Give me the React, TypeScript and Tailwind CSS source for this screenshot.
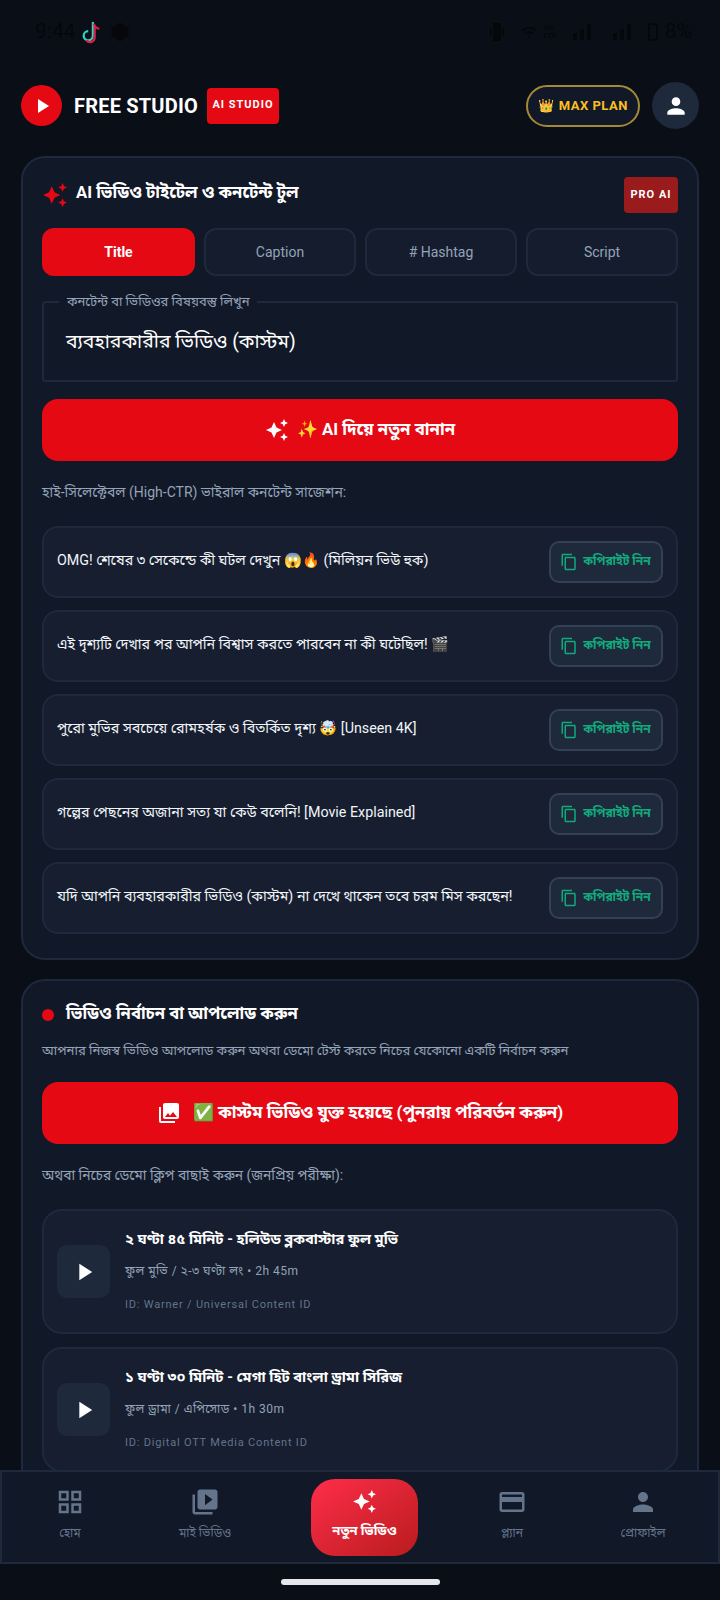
import type { ReactNode } from 'react';

const font = { fontFamily: 'Roboto, "Noto Sans Bengali", "Noto Sans", "Noto Sans CJK SC", sans-serif' };

const SPARKLE =
  'M19 9l1.25-2.75L23 5l-2.75-1.25L19 1l-1.25 2.75L15 5l2.75 1.25L19 9zm-7.5.5L9 4 6.5 9.5 1 12l5.5 2.5L9 20l2.5-5.5L17 12l-5.5-2.5zM19 15l-1.25 2.75L15 19l2.75 1.25L19 23l1.25-2.75L23 19l-2.75-1.25L19 15z';
const COPY =
  'M16 1H4c-1.1 0-2 .9-2 2v14h2V3h12V1zm3 4H8c-1.1 0-2 .9-2 2v14c0 1.1.9 2 2 2h11c1.1 0 2-.9 2-2V7c0-1.1-.9-2-2-2zm0 16H8V7h11v14z';
const PERSON =
  'M12 12c2.21 0 4-1.79 4-4s-1.79-4-4-4-4 1.79-4 4 1.79 4 4 4zm0 2c-2.67 0-8 1.34-8 4v2h16v-2c0-2.66-5.33-4-8-4z';
const PLAY = 'M8 5v14l11-7z';
const GRID =
  'M3 3v8h8V3H3zm6 6H5V5h4v4zm-6 4v8h8v-8H3zm6 6H5v-4h4v4zm4-16v8h8V3h-8zm6 6h-4V5h4v4zm-6 4v8h8v-8h-8zm6 6h-4v-4h4v4z';
const VIDEOS =
  'M4 6H2v14c0 1.1.9 2 2 2h14v-2H4V6zm16-4H8c-1.1 0-2 .9-2 2v12c0 1.1.9 2 2 2h12c1.1 0 2-.9 2-2V4c0-1.1-.9-2-2-2zm-8 12.5v-9l6 4.5-6 4.5z';
const CARD =
  'M20 4H4c-1.11 0-1.99.89-1.99 2L2 18c0 1.11.89 2 2 2h16c1.11 0 2-.89 2-2V6c0-1.11-.89-2-2-2zm0 14H4v-6h16v6zm0-10H4V6h16v2z';
const PHOTOS =
  'M22 16V4c0-1.1-.9-2-2-2H8c-1.1 0-2 .9-2 2v12c0 1.1.9 2 2 2h12c1.1 0 2-.9 2-2zm-11-4l2.03 2.71L16 11l4 5H8l3-4zM2 6v14c0 1.1.9 2 2 2h14v-2H4V6H2z';

function Icon({ d, className }: { d: string; className: string }) {
  return (
    <svg viewBox="0 0 24 24" fill="currentColor" className={className}>
      <path d={d} />
    </svg>
  );
}

function Signal({ className }: { className: string }) {
  return (
    <div className={`flex items-end gap-[3px] ${className}`}>
      <span className="h-[7px] w-[4px] bg-current" />
      <span className="h-[11px] w-[4px] bg-current" />
      <span className="h-[16px] w-[4px] bg-current" />
    </div>
  );
}

const tabs = ['Caption', '# Hashtag', 'Script'];

const suggestions: ReactNode[] = [
  'OMG! শেষের ৩ সেকেন্ডে কী ঘটল দেখুন 😱🔥 (মিলিয়ন ভিউ হুক)',
  'এই দৃশ্যটি দেখার পর আপনি বিশ্বাস করতে পারবেন না কী ঘটেছিল! 🎬',
  'পুরো মুভির সবচেয়ে রোমহর্ষক ও বিতর্কিত দৃশ্য 🤯 [Unseen 4K]',
  'গল্পের পেছনের অজানা সত্য যা কেউ বলেনি! [Movie Explained]',
  'যদি আপনি ব্যবহারকারীর ভিডিও (কাস্টম) না দেখে থাকেন তবে চরম মিস করছেন!',
];

const clips = [
  {
    title: '২ ঘণ্টা ৪৫ মিনিট - হলিউড ব্লকবাস্টার ফুল মুভি',
    meta: 'ফুল মুভি / ২-৩ ঘণ্টা লং • 2h 45m',
    id: 'ID: Warner / Universal Content ID',
  },
  {
    title: '১ ঘণ্টা ৩০ মিনিট - মেগা হিট বাংলা ড্রামা সিরিজ',
    meta: 'ফুল ড্রামা / এপিসোড • 1h 30m',
    id: 'ID: Digital OTT Media Content ID',
  },
];

const navLeft = [
  { label: 'হোম', icon: GRID, box: 'w-[136px]' },
  { label: 'মাই ভিডিও', icon: VIDEOS, box: 'w-[134px]' },
];
const navRight = [
  { label: 'প্ল্যান', icon: CARD, box: 'w-[130px]' },
  { label: 'প্রোফাইল', icon: PERSON, box: 'w-[132px]' },
];

export default function App() {
  return (
    <div style={font} className="relative h-[1600px] w-[720px] overflow-hidden bg-[#0a0e17] text-white">
      {/* Status bar */}
      <div className="flex h-[64px] items-center justify-between pl-[35px] pr-[28px] text-[#05070b]">
        <div className="flex items-center gap-[4px]">
          <span className="text-[21px]">9:44</span>
          <svg viewBox="0 0 24 28" className="h-[26px] w-[22px]" fill="none" strokeWidth="2.4">
            <path d="M14 3v15a5 5 0 1 1-5-5" stroke="#2dd4bf" />
            <path d="M15 5c1 3 3 5 6 5.500M16 6v14a5 5 0 0 1-9 3" stroke="#e11d48" />
          </svg>
          <svg viewBox="0 0 24 24" className="ml-[4px] h-[20px] w-[20px]" fill="currentColor">
            <path d="M12 1l10 6v10l-10 6-10-6V7z" />
          </svg>
        </div>
        <div className="flex items-center">
          <svg viewBox="0 0 16 18" className="h-[18px] w-[16px]" fill="currentColor">
            <path d="M4 0h8v18H4zM1 5h2v8H1zM13 5h2v8h-2z" />
          </svg>
          <svg
            viewBox="0 0 24 24"
            className="ml-[15px] h-[18px] w-[18px]"
            fill="none"
            stroke="currentColor"
            strokeWidth="2.500"
          >
            <path d="M3 10c5-5 13-5 18 0M7 14c3-2.500 7-2.500 10 0M11 18h2" />
          </svg>
          <span className="ml-[6px] w-[20px] text-[8px] font-bold leading-[8px]">
            Vo
            <br />
            LTE
          </span>
          <Signal className="ml-[9px]" />
          <Signal className="ml-[22px]" />
          <div className="ml-[17px] h-[18px] w-[10px] rounded-[3px] border-2 border-current" />
          <span className="ml-[7px] text-[21px]">8%</span>
        </div>
      </div>

      {/* Header */}
      <header className="mt-[18px] flex h-[47px] items-center justify-between pl-[21px] pr-[21px]">
        <div className="flex items-center">
          <div className="flex h-[41px] w-[41px] items-center justify-center rounded-full bg-[#e50914]">
            <Icon d={PLAY} className="h-[24px] w-[24px] text-white" />
          </div>
          <span className="ml-[12px] text-[20px] font-bold tracking-[0.2px]">FREE STUDIO</span>
          <span className="ml-[9px] flex h-[36px] w-[72px] items-center justify-center rounded-[4px] bg-[#e50914] text-[11px] font-bold tracking-[1px]">
            AI STUDIO
          </span>
        </div>
        <div className="flex items-center gap-[12px]">
          <div className="flex h-[42px] w-[114px] items-center justify-center gap-[4px] rounded-full border-2 border-[#a58a35] bg-[#111827] text-[13px] font-bold tracking-[0.5px] text-[#fbbf24]">
            <span>👑</span>
            <span>MAX PLAN</span>
          </div>
          <div className="flex h-[47px] w-[47px] items-center justify-center rounded-full bg-[#1e293b]">
            <Icon d={PERSON} className="h-[26px] w-[26px] text-white" />
          </div>
        </div>
      </header>

      <main className="mt-[27px] flex flex-col gap-[19px] px-[21px]">
        {/* Title tool card */}
        <section className="h-[804px] rounded-[24px] border-2 border-[#1e293b] bg-[#111827] px-[19px] pt-[19px]">
          <div className="flex h-[36px] items-center justify-between">
            <div className="flex items-center gap-[8px]">
              <Icon d={SPARKLE} className="h-[26px] w-[26px] text-[#e50914]" />
              <h2 className="pb-[4px] text-[16.6px] font-bold">AI ভিডিও টাইটেল ও কনটেন্ট টুল</h2>
            </div>
            <span className="flex h-[36px] w-[54px] items-center justify-center rounded-[4px] bg-[#991b1b] text-[11px] font-bold tracking-[1px]">
              PRO AI
            </span>
          </div>

          <div className="mt-[15px] flex gap-[9px]">
            <div className="flex h-[48px] w-[153px] items-center justify-center rounded-[12px] bg-[#e50914] text-[14px] font-bold">
              Title
            </div>
            {tabs.map((tab) => (
              <div
                key={tab}
                className="flex h-[48px] flex-1 items-center justify-center rounded-[12px] border-2 border-[#1e293b] bg-[#141c2e] text-[14px] text-[#94a3b8]"
              >
                {tab}
              </div>
            ))}
          </div>

          <div className="relative mt-[25px] flex h-[81px] items-center rounded-[4px] border-2 border-[#1e293b] pl-[22px]">
            <span className="absolute -top-[10px] left-[15px] bg-[#111827] px-[8px] text-[13px] leading-[18px] text-[#94a3b8]">
              কনটেন্ট বা ভিডিওর বিষয়বস্তু লিখুন
            </span>
            <span className="text-[19.4px]">ব্যবহারকারীর ভিডিও (কাস্টম)</span>
          </div>

          <button className="mt-[17px] flex h-[62px] w-full items-center justify-center gap-[8px] rounded-[16px] bg-[#e50914] text-[16.8px] font-bold">
            <Icon d={SPARKLE} className="h-[24px] w-[24px] text-white" />
            <span>✨ AI দিয়ে নতুন বানান</span>
          </button>

          <p className="mt-[21px] text-[14px] leading-[20px] text-[#94a3b8]">
            হাই-সিলেক্টেবল (High-CTR) ভাইরাল কনটেন্ট সাজেশন:
          </p>

          <div className="mt-[24px] flex flex-col gap-[12px]">
            {suggestions.map((text, i) => (
              <div
                key={i}
                className="flex h-[72px] items-center justify-between rounded-[16px] border-2 border-[#1e293b] bg-[#161e2f] px-[13px]"
              >
                <span className="pb-[3px] text-[14.3px] text-[#f1f5f9]">{text}</span>
                <div className="flex h-[42px] w-[114px] shrink-0 items-center justify-center gap-[5px] rounded-[10px] border-2 border-[#334155] bg-[#1e293b] pr-[1px] text-[12px] font-bold text-[#12aa7d]">
                  <Icon d={COPY} className="h-[18px] w-[18px]" />
                  <span className="pb-[2px]">কপিরাইট নিন</span>
                </div>
              </div>
            ))}
          </div>
        </section>

        {/* Upload card */}
        <section className="rounded-[24px] border-2 border-[#1e293b] bg-[#111827] px-[19px] pb-[24px] pt-[18px]">
          <div className="flex h-[30px] items-center gap-[12px]">
            <span className="mt-[2px] h-[12px] w-[12px] rounded-full bg-[#e50914]" />
            <h2 className="text-[16.6px] font-bold">ভিডিও নির্বাচন বা আপলোড করুন</h2>
          </div>
          <p className="mt-[12px] text-[13.1px] leading-[20px] text-[#94a3b8]">
            আপনার নিজস্ব ভিডিও আপলোড করুন অথবা ডেমো টেস্ট করতে নিচের যেকোনো একটি নির্বাচন করুন
          </p>
          <button className="mt-[21px] flex h-[62px] w-full items-center justify-center gap-[12px] rounded-[16px] bg-[#e50914] text-[16.9px] font-bold">
            <Icon d={PHOTOS} className="h-[24px] w-[24px] text-white" />
            <span>✅ কাস্টম ভিডিও যুক্ত হয়েছে (পুনরায় পরিবর্তন করুন)</span>
          </button>
          <p className="mt-[21px] text-[13.8px] leading-[20px] text-[#94a3b8]">
            অথবা নিচের ডেমো ক্লিপ বাছাই করুন (জনপ্রিয় পরীক্ষা):
          </p>
          <div className="mt-[24px] flex flex-col gap-[13px]">
            {clips.map((clip) => (
              <div
                key={clip.id}
                className="flex h-[125px] items-center gap-[15px] rounded-[20px] border-2 border-[#1e293b] bg-[#161e2f] px-[13px]"
              >
                <div className="flex h-[53px] w-[53px] items-center justify-center rounded-[10px] bg-[#1e293b]">
                  <Icon d={PLAY} className="h-[28px] w-[28px] text-white" />
                </div>
                <div className="flex flex-col pb-[3px]">
                  <span className="text-[14.6px] font-bold leading-[24px]">{clip.title}</span>
                  <span className="mt-[10px] text-[12px] leading-[20px] tracking-[0.5px] text-[#94a3b8]">{clip.meta}</span>
                  <span className="mt-[16px] text-[11px] leading-[16px] tracking-[0.8px] text-[#64748b]">{clip.id}</span>
                </div>
              </div>
            ))}
          </div>
        </section>
      </main>

      {/* Bottom navigation */}
      <nav className="absolute inset-x-0 top-[1470px] flex h-[94px] items-center border-2 border-[#1e293b] bg-[#111827]">
        {navLeft.map((item) => (
          <div key={item.label} className={`mb-[6px] flex flex-col items-center gap-[8px] ${item.box}`}>
            <Icon d={item.icon} className="h-[30px] w-[30px] text-[#64748b]" />
            <span className="text-[12px] leading-[16px] text-[#64748b]">{item.label}</span>
          </div>
        ))}
        <div className="ml-[39px] mr-[29px] flex h-[77px] w-[107px] flex-col items-center justify-center gap-[9px] rounded-[24px] bg-gradient-to-br from-[#ff2d4a] to-[#b91c1c] pb-[6px]">
          <Icon d={SPARKLE} className="h-[25px] w-[25px] text-white" />
          <span className="text-[13px] font-bold leading-[16px]">নতুন ভিডিও</span>
        </div>
        {navRight.map((item) => (
          <div key={item.label} className={`mb-[6px] flex flex-col items-center gap-[8px] ${item.box}`}>
            <Icon d={item.icon} className="h-[30px] w-[30px] text-[#64748b]" />
            <span className="text-[12px] leading-[16px] text-[#64748b]">{item.label}</span>
          </div>
        ))}
      </nav>

      {/* Gesture bar */}
      <div className="absolute inset-x-0 bottom-0 top-[1564px] flex items-center justify-center bg-[#0a0e17]">
        <div className="h-[6px] w-[159px] rounded-full bg-[#e5e7eb]" />
      </div>
    </div>
  );
}
